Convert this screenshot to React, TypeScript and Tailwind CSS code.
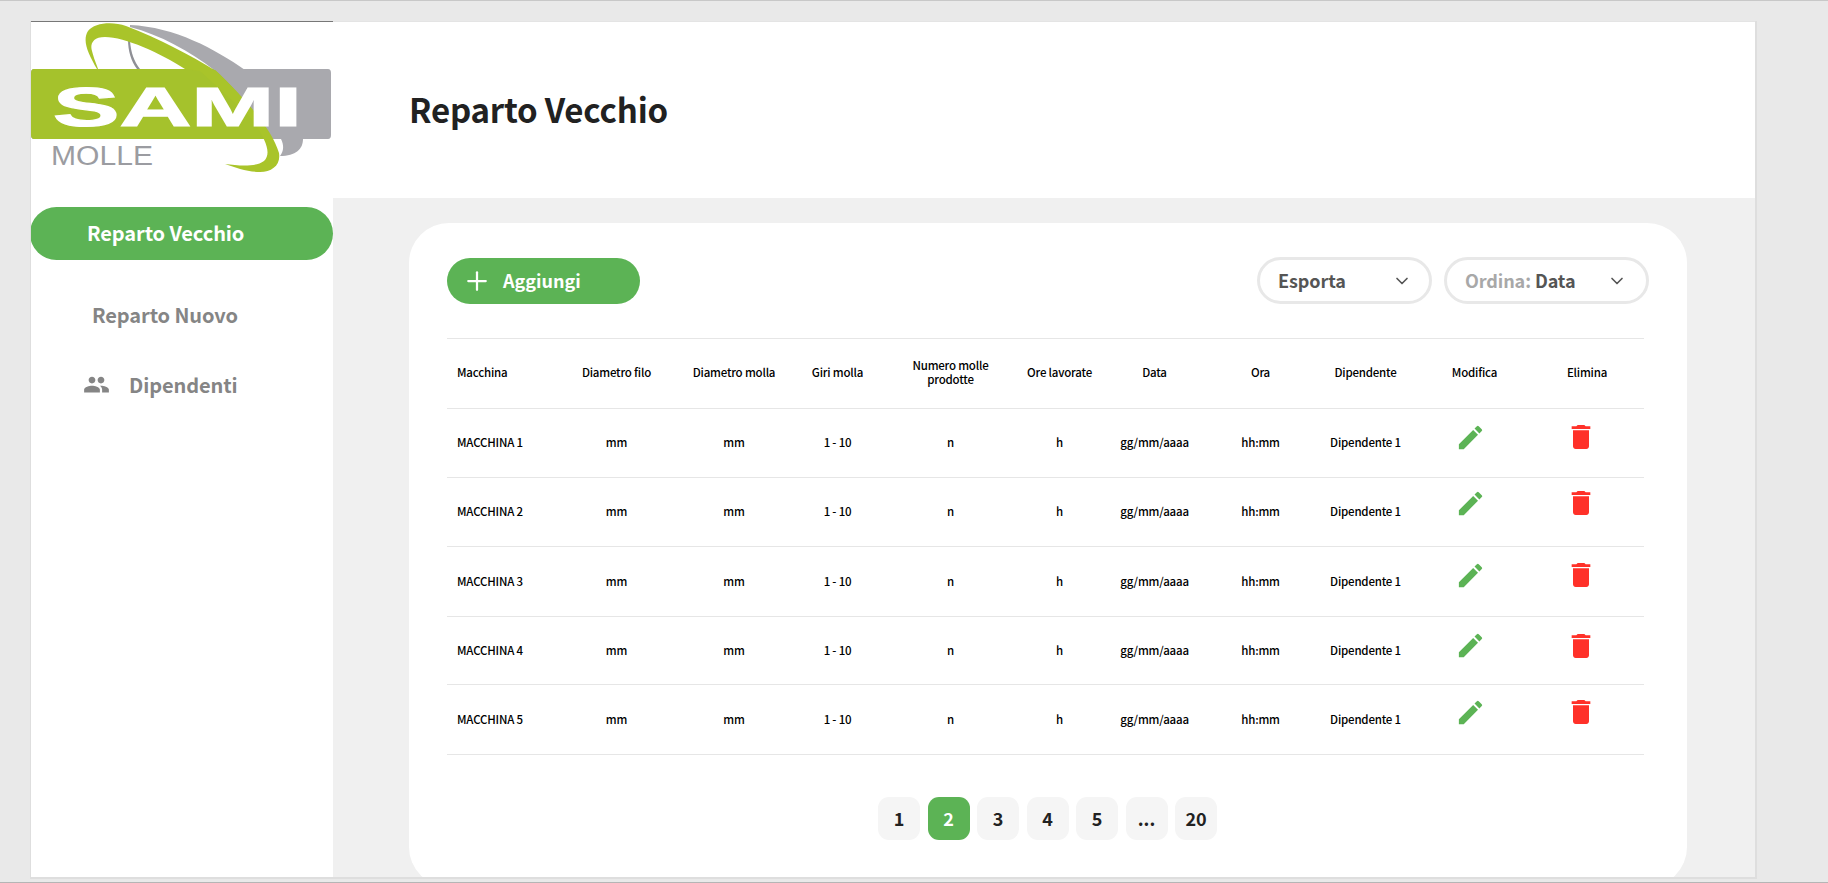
import React from "react"
import { MdEdit, MdDelete, MdPeople } from "react-icons/md"
import { ChevronDown, Plus } from "lucide-react"

const columns = [
  { label: "Macchina", width: "w-[111px]", align: "text-left pl-[10px]" },
  { label: "Diametro filo", width: "w-[117px]", align: "text-center" },
  { label: "Diametro molla", width: "w-[118px]", align: "text-center" },
  { label: "Giri molla", width: "w-[89px]", align: "text-center" },
  { label: "Numero molle prodotte", width: "w-[137px]", align: "text-center" },
  { label: "Ore lavorate", width: "w-[81px]", align: "text-center" },
  { label: "Data", width: "w-[109px]", align: "text-center" },
  { label: "Ora", width: "w-[103px]", align: "text-center" },
  { label: "Dipendente", width: "w-[107px]", align: "text-center" },
  { label: "Modifica", width: "w-[111px]", align: "text-center" },
  { label: "Elimina", width: "w-[114px]", align: "text-center" },
]

const rows = [
  { name: "MACCHINA 1", height: "h-[69px]", shift: "-mt-[12px]" },
  { name: "MACCHINA 2", height: "h-[69px]", shift: "-mt-[18px]" },
  { name: "MACCHINA 3", height: "h-[70px]", shift: "-mt-[13px]" },
  { name: "MACCHINA 4", height: "h-[68px]", shift: "-mt-[10px]" },
  { name: "MACCHINA 5", height: "h-[70px]", shift: "-mt-[15px]" },
]

const pages = ["1", "2", "3", "4", "5", "...", "20"]

const Logo = () => (
  <svg viewBox="30 21 303 160" className="block -ml-[1px] w-[303px] h-[160px] shrink-0">
    <path d="M32 68 H328 Q331 68 331 72 V134 Q331 138 328 138 H34 Q31 138 31 134 V72 Q31 68 34 68 Z" fill="#a9a9ae" />
    <path d="M34 68 H214 C238 90 258 115 271 138 H34 Q31 138 31 134 V72 Q31 68 34 68 Z" fill="#a5c22c" />
    <path d="M130 24 C175 26 215 48 245 69 L214 69 C190 50 160 34 130 26 Z" fill="#a9a9ae" />
    <path d="M130 40 C131 52 134 60 140 68 L137 68 C131 60 128 50 128 38 Z" fill="#8f9096" />
    <path d="M97 68 C88 52 82 40 88 30 C94 22 112 20 126 25 C160 38 190 54 216 70 C244 96 272 128 279 152 C281 164 272 171 260 171 C248 171 236 167 225 163 C240 165 256 166 264 160 C272 152 266 138 250 116 L200 70 L185 68 C160 52 125 36 105 36 C92 36 90 44 92 50 C94 58 96 62 98 68 Z" fill="#a9c42a" />
    <path d="M281 138 H303 C303 148 296 155 280 155 C284 150 284 144 281 138 Z" fill="#a9a9ae" />
    <text x="53" y="125" fontSize="56" fontWeight="700" fill="#ffffff" stroke="#ffffff" strokeWidth="1.2" fontFamily="'Liberation Sans', sans-serif" textLength="249" lengthAdjust="spacingAndGlyphs">SAMI</text>
    <text x="51" y="164" fontSize="27" fill="#9b9ca1" fontFamily="'Liberation Sans', sans-serif" textLength="102" lengthAdjust="spacingAndGlyphs">MOLLE</text>
  </svg>
)

const SelectBox = ({ width, chevron, children }: { width: string; chevron: string; children: React.ReactNode }) => (
  <div className={`${width} h-[47px] rounded-full border-[3px] border-[#e8e8e8] flex items-center justify-between pl-[18px] ${chevron} text-[18px] tracking-[-0.1px] font-semibold text-[#555555]`}>
    <span>{children}</span>
    <ChevronDown size={20} strokeWidth={2} />
  </div>
)

const App = () => {
  return (
    <div className="h-[883px] w-full overflow-hidden bg-[#e9e9e9] border-t border-b border-t-[#c8c8c8] border-b-[#b5b5b5] pt-[20px] pl-[30px] font-['Noto_Sans_CJK_SC',sans-serif]">
      <div className="w-[1727px] h-[858px] overflow-hidden flex bg-[#f0f0f0] border-l border-r-2 border-b-2 border-[#dedede]">
        <aside className="w-[302px] shrink-0 bg-white border-t border-[#777777] flex flex-col">
          <Logo />
          <nav className="-ml-[1px] w-[303px] mt-[25px] flex flex-col">
            <div className="h-[53px] rounded-full bg-[#5cb355] text-white text-[20px] tracking-[-0.1px] font-semibold flex items-center pl-[57px] pb-[2px]">
              Reparto Vecchio
            </div>
            <div className="mt-[30px] h-[53px] text-[#858585] text-[20px] tracking-[-0.1px] font-semibold flex items-center pl-[62px] pb-[4px]">
              Reparto Nuovo
            </div>
            <div className="mt-[17px] h-[53px] text-[#858585] text-[20px] tracking-[-0.1px] font-semibold flex items-center pl-[53px] gap-[19px] pb-[4px]">
              <MdPeople size={27} />
              Dipendenti
            </div>
          </nav>
        </aside>
        <main className="flex-1 flex flex-col min-w-0">
          <header className="h-[177px] shrink-0 bg-white border-t border-[#e4e4e4] flex items-center pl-[76px]">
            <h1 className="text-[33px] tracking-[-0.2px] font-semibold text-[#212121]">Reparto Vecchio</h1>
          </header>
          <section className="ml-[76px] mt-[25px] w-[1278px] h-[664px] shrink-0 rounded-[40px] bg-white pt-[34px] px-[38px]">
            <div className="flex items-center justify-between">
              <button className="w-[193px] h-[46px] rounded-full bg-[#5cb355] text-white text-[18px] font-semibold flex items-center pl-[15px] gap-[11px]">
                <Plus size={30} strokeWidth={1.8} />
                Aggiungi
              </button>
              <div className="flex gap-[12px]">
                <SelectBox width="w-[175px]" chevron="pr-[17px]">Esporta</SelectBox>
                <SelectBox width="w-[205px]" chevron="pr-[19px]">
                  <span className="text-[#a8a8a8]">Ordina:</span> Data
                </SelectBox>
              </div>
            </div>
            <table className="mt-[34px] w-[1197px] table-fixed border-collapse text-[11.5px] tracking-[-0.2px] font-medium text-black">
              <thead>
                <tr className="h-[70px] border-y border-[#e6e6e6]">
                  {columns.map((col) => (
                    <th key={col.label} className={`${col.width} ${col.align} font-medium leading-[14px] px-0 pb-[3px]`}>
                      {col.label === "Numero molle prodotte" ? (
                        <>
                          Numero molle
                          <br />
                          prodotte
                        </>
                      ) : (
                        <span className="whitespace-nowrap">{col.label}</span>
                      )}
                    </th>
                  ))}
                </tr>
              </thead>
              <tbody>
                {rows.map((row) => (
                  <tr key={row.name} className={`${row.height} border-b border-[#e6e6e6]`}>
                    <td className="pl-[10px]">{row.name}</td>
                    <td className="text-center">mm</td>
                    <td className="text-center">mm</td>
                    <td className="text-center">1 - 10</td>
                    <td className="text-center">n</td>
                    <td className="text-center">h</td>
                    <td className="text-center">gg/mm/aaaa</td>
                    <td className="text-center">hh:mm</td>
                    <td className="text-center whitespace-nowrap">Dipendente 1</td>
                    <td>
                      <MdEdit size={31} className={`ml-[36px] text-[#5cb355] ${row.shift}`} />
                    </td>
                    <td>
                      <MdDelete size={32} className={`ml-[35px] text-[#ff3129] ${row.shift}`} />
                    </td>
                  </tr>
                ))}
              </tbody>
            </table>
            <div className="mt-[42px] -ml-[1px] flex justify-center gap-[7.5px]">
              {pages.map((page) => (
                <div
                  key={page}
                  className={`w-[42px] h-[43px] rounded-[11px] flex items-center justify-center text-[18px] font-semibold ${
                    page === "2" ? "bg-[#5cb355] text-white" : "bg-[#f5f5f5] text-[#222222]"
                  }`}
                >
                  {page}
                </div>
              ))}
            </div>
          </section>
        </main>
      </div>
    </div>
  )
}

export default App
